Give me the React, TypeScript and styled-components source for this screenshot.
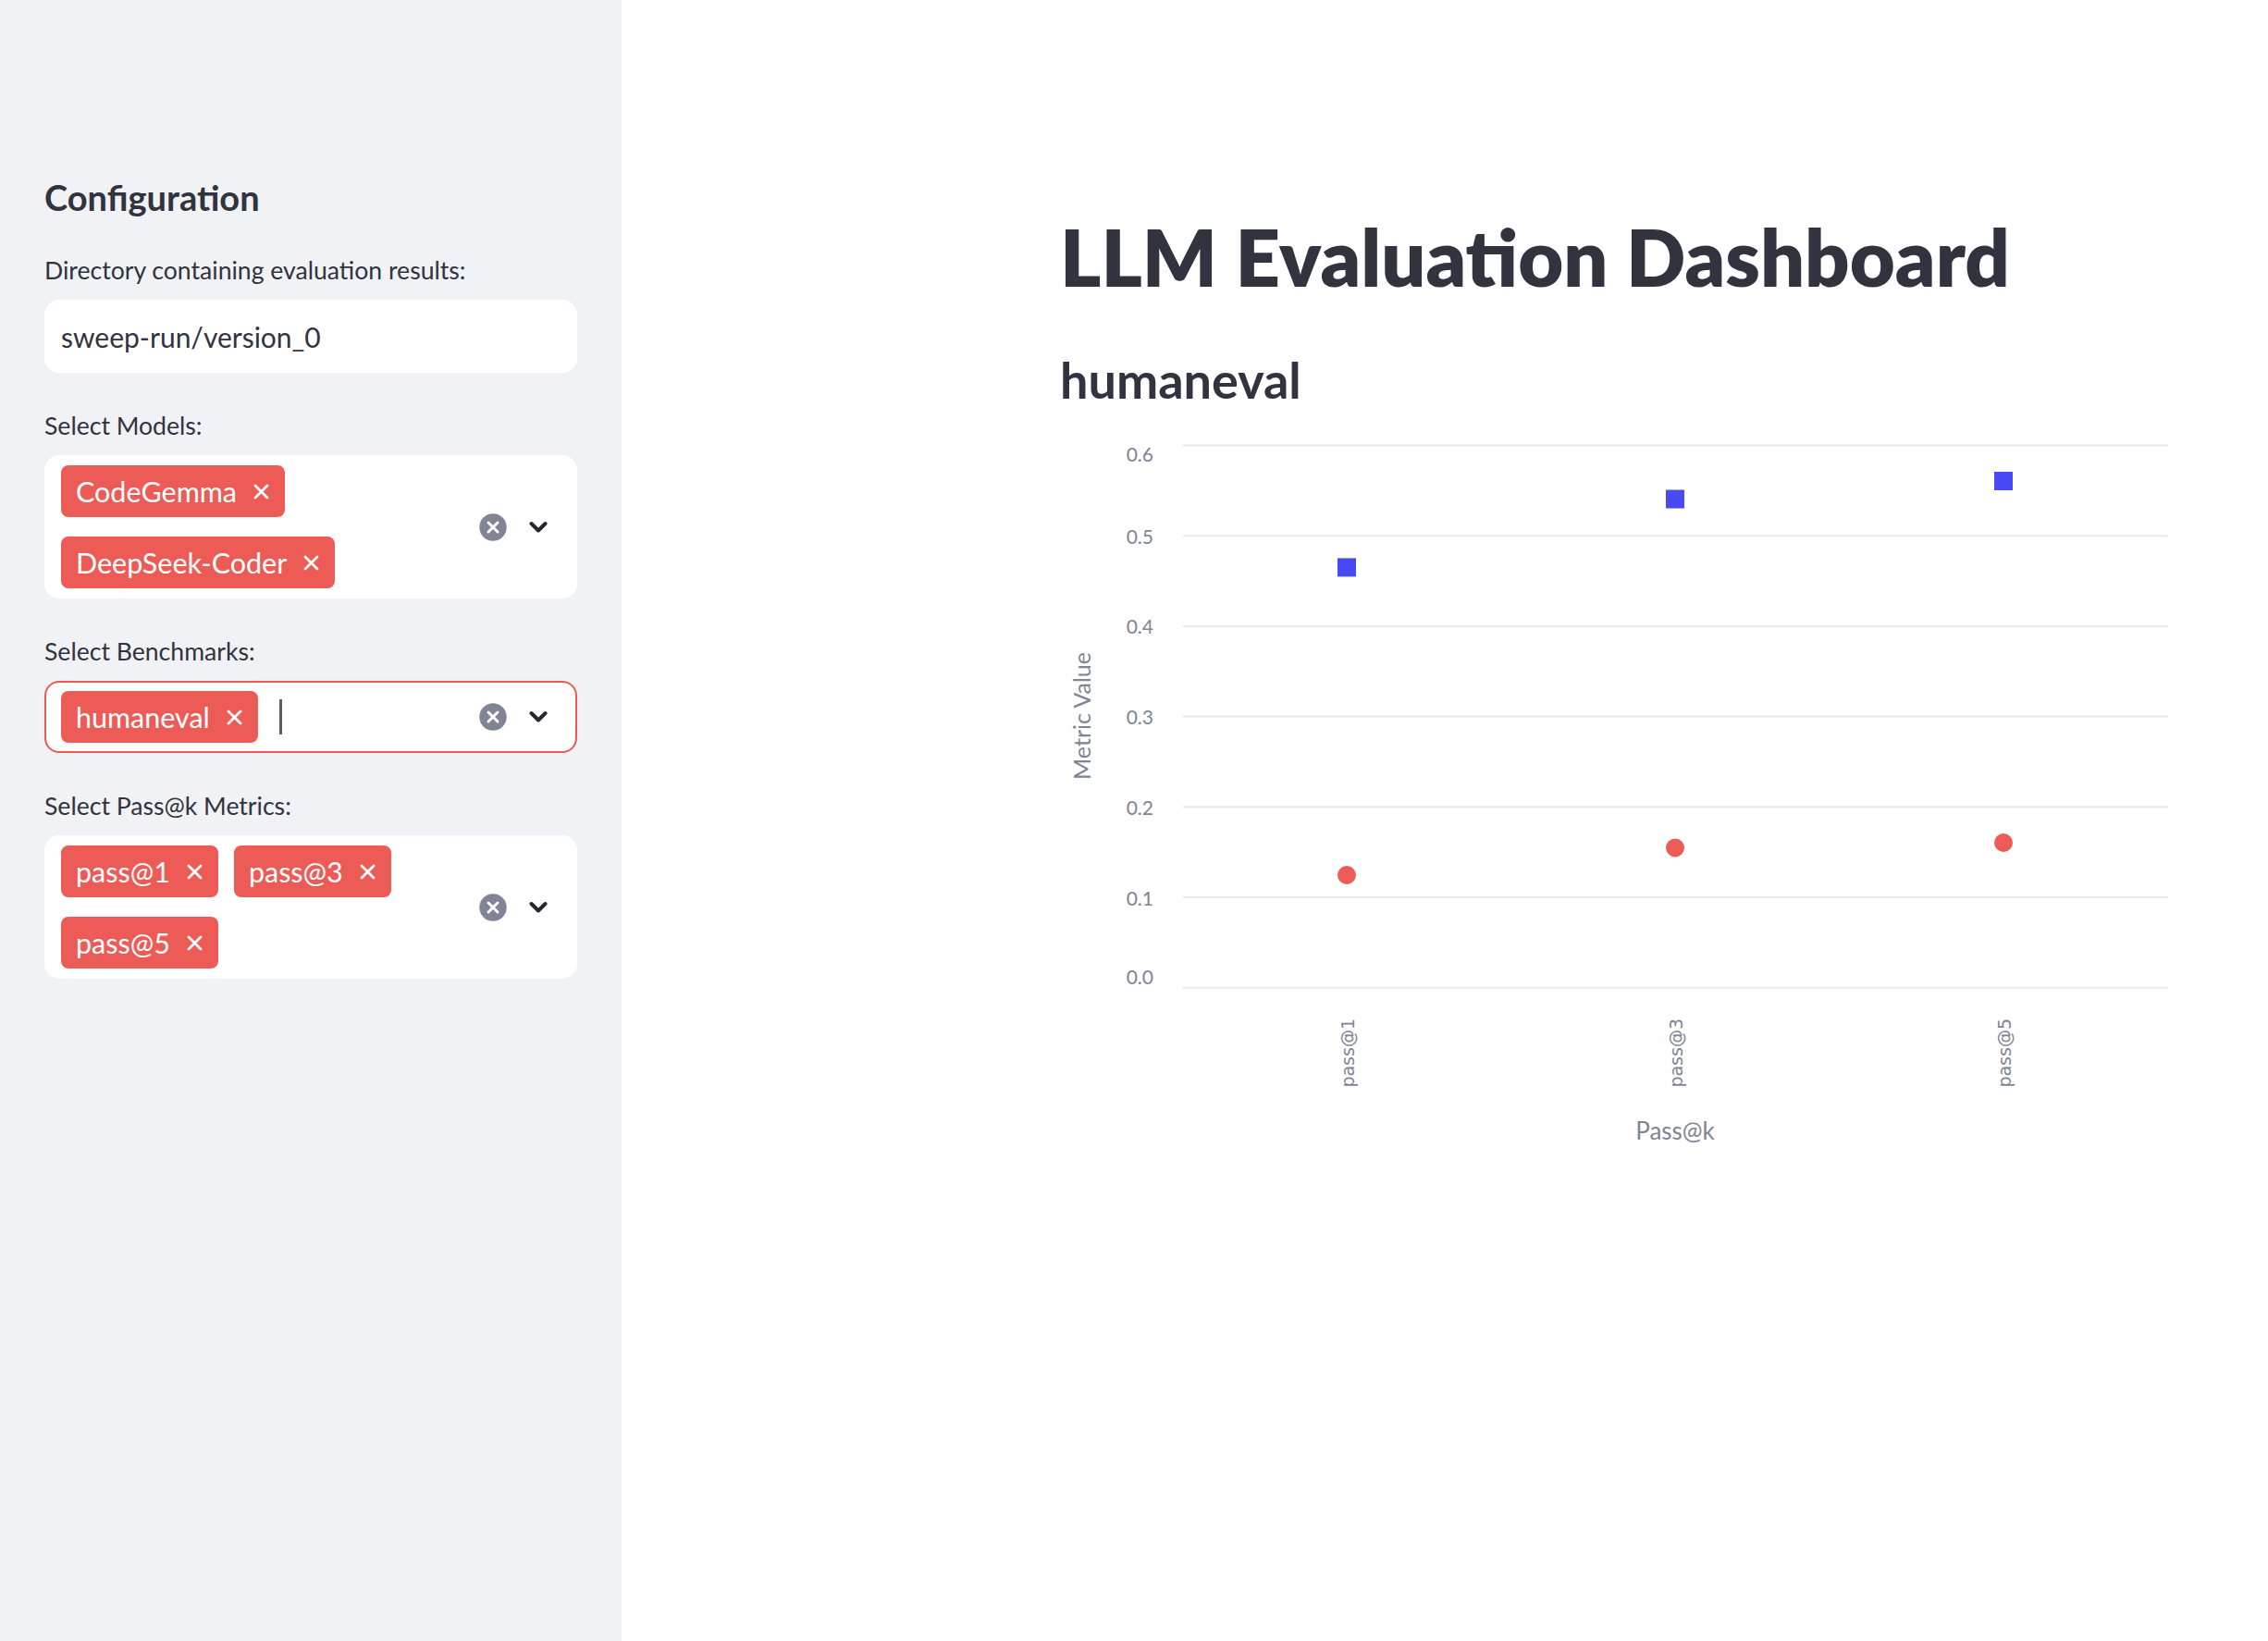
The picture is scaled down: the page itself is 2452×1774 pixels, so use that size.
import styled, { createGlobalStyle } from "styled-components";

const GlobalStyle = createGlobalStyle`
  body {
    margin: 0;
    font-family: Lato, "Noto Sans", sans-serif;
    color: #31333f;
    background: #ffffff;
  }
`;

const Page = styled.div`
  display: flex;
  min-height: 1774px;
`;

const Sidebar = styled.aside`
  width: 672px;
  flex-shrink: 0;
  box-sizing: border-box;
  background: #f0f2f6;
  padding: 185px 48px 0;
  display: flex;
  flex-direction: column;
`;

const SidebarTitle = styled.h2`
  margin: 0 0 31px;
  font-size: 38px;
  line-height: 56px;
  font-weight: 700;
  color: #31333f;
`;

const Field = styled.div`
  display: flex;
  flex-direction: column;
  margin-bottom: 37px;
`;

const Label = styled.label`
  font-size: 26.6px;
  line-height: 40px;
  margin-bottom: 12px;
  color: #31333f;
`;

const TextBox = styled.div`
  height: 79px;
  box-sizing: border-box;
  background: #ffffff;
  border-radius: 16px;
  padding: 0 18px;
  display: flex;
  align-items: center;
  font-size: 30px;
  color: #31333f;
`;

const MultiBox = styled.div<{ $focused?: boolean }>`
  box-sizing: border-box;
  background: #ffffff;
  border-radius: 16px;
  border: 2px solid ${(p) => (p.$focused ? "#ec5953" : "transparent")};
  padding: 9px 30px 9px 16px;
  display: flex;
  align-items: center;
`;

const TagWrap = styled.div`
  flex: 1;
  display: flex;
  flex-wrap: wrap;
  align-items: center;
  gap: 21px 17px;
`;

const Tag = styled.span`
  height: 56px;
  box-sizing: border-box;
  display: inline-flex;
  align-items: center;
  gap: 18px;
  padding: 0 17px 0 16px;
  background: #ec5b56;
  border-radius: 8px;
  color: #ffffff;
  font-size: 30.5px;
`;

const Caret = styled.span`
  width: 3px;
  height: 38px;
  background: #5a5c66;
  margin-left: 6px;
`;

const Controls = styled.div`
  display: flex;
  align-items: center;
  gap: 24px;
`;

const MainArea = styled.main`
  flex: 1;
  padding: 227px 0 0 474px;
`;

const Title = styled.h1`
  margin: 0;
  font-size: 84.6px;
  line-height: 1.2;
  font-weight: 800;
  color: #31333f;
`;

const Subheader = styled.h3`
  margin: 50px 0 0;
  font-size: 54px;
  line-height: 1.2;
  font-weight: 700;
  color: #31333f;
`;

const ChartBox = styled.div`
  margin-top: 6px;
  width: 1250px;
  height: 820px;
`;

const TagClose = () => (
  <svg width="17" height="17" viewBox="0 0 17 17">
    <path d="M2 2L15 15M15 2L2 15" stroke="#fff" strokeWidth="2.8" strokeLinecap="round" />
  </svg>
);

const ClearIcon = () => (
  <svg width="30" height="30" viewBox="0 0 30 30">
    <circle cx="15" cy="15" r="14.7" fill="#808495" />
    <path d="M10 10L20 20M20 10L10 20" stroke="#fff" strokeWidth="3" strokeLinecap="round" />
  </svg>
);

const Chevron = () => (
  <svg width="20" height="14" viewBox="0 0 20 14">
    <path d="M2.5 3L10 10.5L17.5 3" stroke="#262730" strokeWidth="4" fill="none" strokeLinecap="round" strokeLinejoin="round" />
  </svg>
);

const MultiSelect = ({ items, focused }: { items: string[]; focused?: boolean }) => (
  <MultiBox $focused={focused}>
    <TagWrap>
      {items.map((t) => (
        <Tag key={t}>
          {t}
          <TagClose />
        </Tag>
      ))}
      {focused && <Caret />}
    </TagWrap>
    <Controls>
      <ClearIcon />
      <Chevron />
    </Controls>
  </MultiBox>
);

// chart geometry, in svg coords
const plotLeft = 133;
const plotRight = 1198;
const zeroY = 618.7;
const unit = 977; // px per 1.0
const catX = [310, 665, 1020];
const cats = ["pass@1", "pass@3", "pass@5"];
const blueVals = [0.465, 0.5406, 0.5606];
const redVals = [0.1246, 0.1548, 0.1604];
const ticks = [0, 0.1, 0.2, 0.3, 0.4, 0.5, 0.6];
const yOf = (v: number) => zeroY - v * unit;
// plotly nudges the first and last labels inside the plot
const labelShift = (v: number) => (v === 0 ? -11 : v === 0.6 ? 10 : 1);

const Chart = () => (
  <ChartBox>
    <svg width="1250" height="820" viewBox="0 0 1250 820">
      {ticks.map((v) => (
        <g key={v}>
          <line x1={plotLeft} x2={plotRight} y1={yOf(v)} y2={yOf(v)} stroke="#e6eaf1" strokeWidth="2" />
          <text
            x="101"
            y={yOf(v) + labelShift(v) + 7.5}
            textAnchor="end"
            fontFamily="Lato, sans-serif"
            fontSize="21"
            fill="#808495"
          >
            {v.toFixed(1)}
          </text>
        </g>
      ))}
      <text
        transform="translate(33 325) rotate(-90)"
        textAnchor="middle"
        fontFamily="Lato, sans-serif"
        fontSize="25"
        fill="#808495"
      >
        Metric Value
      </text>
      {cats.map((c, i) => (
        <text
          key={c}
          transform={`translate(${catX[i] + 8} 652) rotate(-90)`}
          textAnchor="end"
          fontFamily="'DejaVu Sans', sans-serif"
          fontSize="19"
          fill="#808495"
        >
          {c}
        </text>
      ))}
      <text x="665" y="783" textAnchor="middle" fontFamily="Lato, sans-serif" fontSize="26" fill="#808495">
        Pass@k
      </text>
      {blueVals.map((v, i) => (
        <rect key={i} x={catX[i] - 10} y={yOf(v) - 10} width="20" height="20" fill="#4a4af4" />
      ))}
      {redVals.map((v, i) => (
        <circle key={i} cx={catX[i]} cy={yOf(v)} r="10" fill="#ec5b56" />
      ))}
    </svg>
  </ChartBox>
);

export default function App() {
  return (
    <Page>
      <GlobalStyle />
      <Sidebar>
        <SidebarTitle>Configuration</SidebarTitle>
        <Field>
          <Label>Directory containing evaluation results:</Label>
          <TextBox>sweep-run/version_0</TextBox>
        </Field>
        <Field>
          <Label>Select Models:</Label>
          <MultiSelect items={["CodeGemma", "DeepSeek-Coder"]} />
        </Field>
        <Field>
          <Label>Select Benchmarks:</Label>
          <MultiSelect items={["humaneval"]} focused />
        </Field>
        <Field>
          <Label>Select Pass@k Metrics:</Label>
          <MultiSelect items={["pass@1", "pass@3", "pass@5"]} />
        </Field>
      </Sidebar>
      <MainArea>
        <Title>LLM Evaluation Dashboard</Title>
        <Subheader>humaneval</Subheader>
        <Chart />
      </MainArea>
    </Page>
  );
}
